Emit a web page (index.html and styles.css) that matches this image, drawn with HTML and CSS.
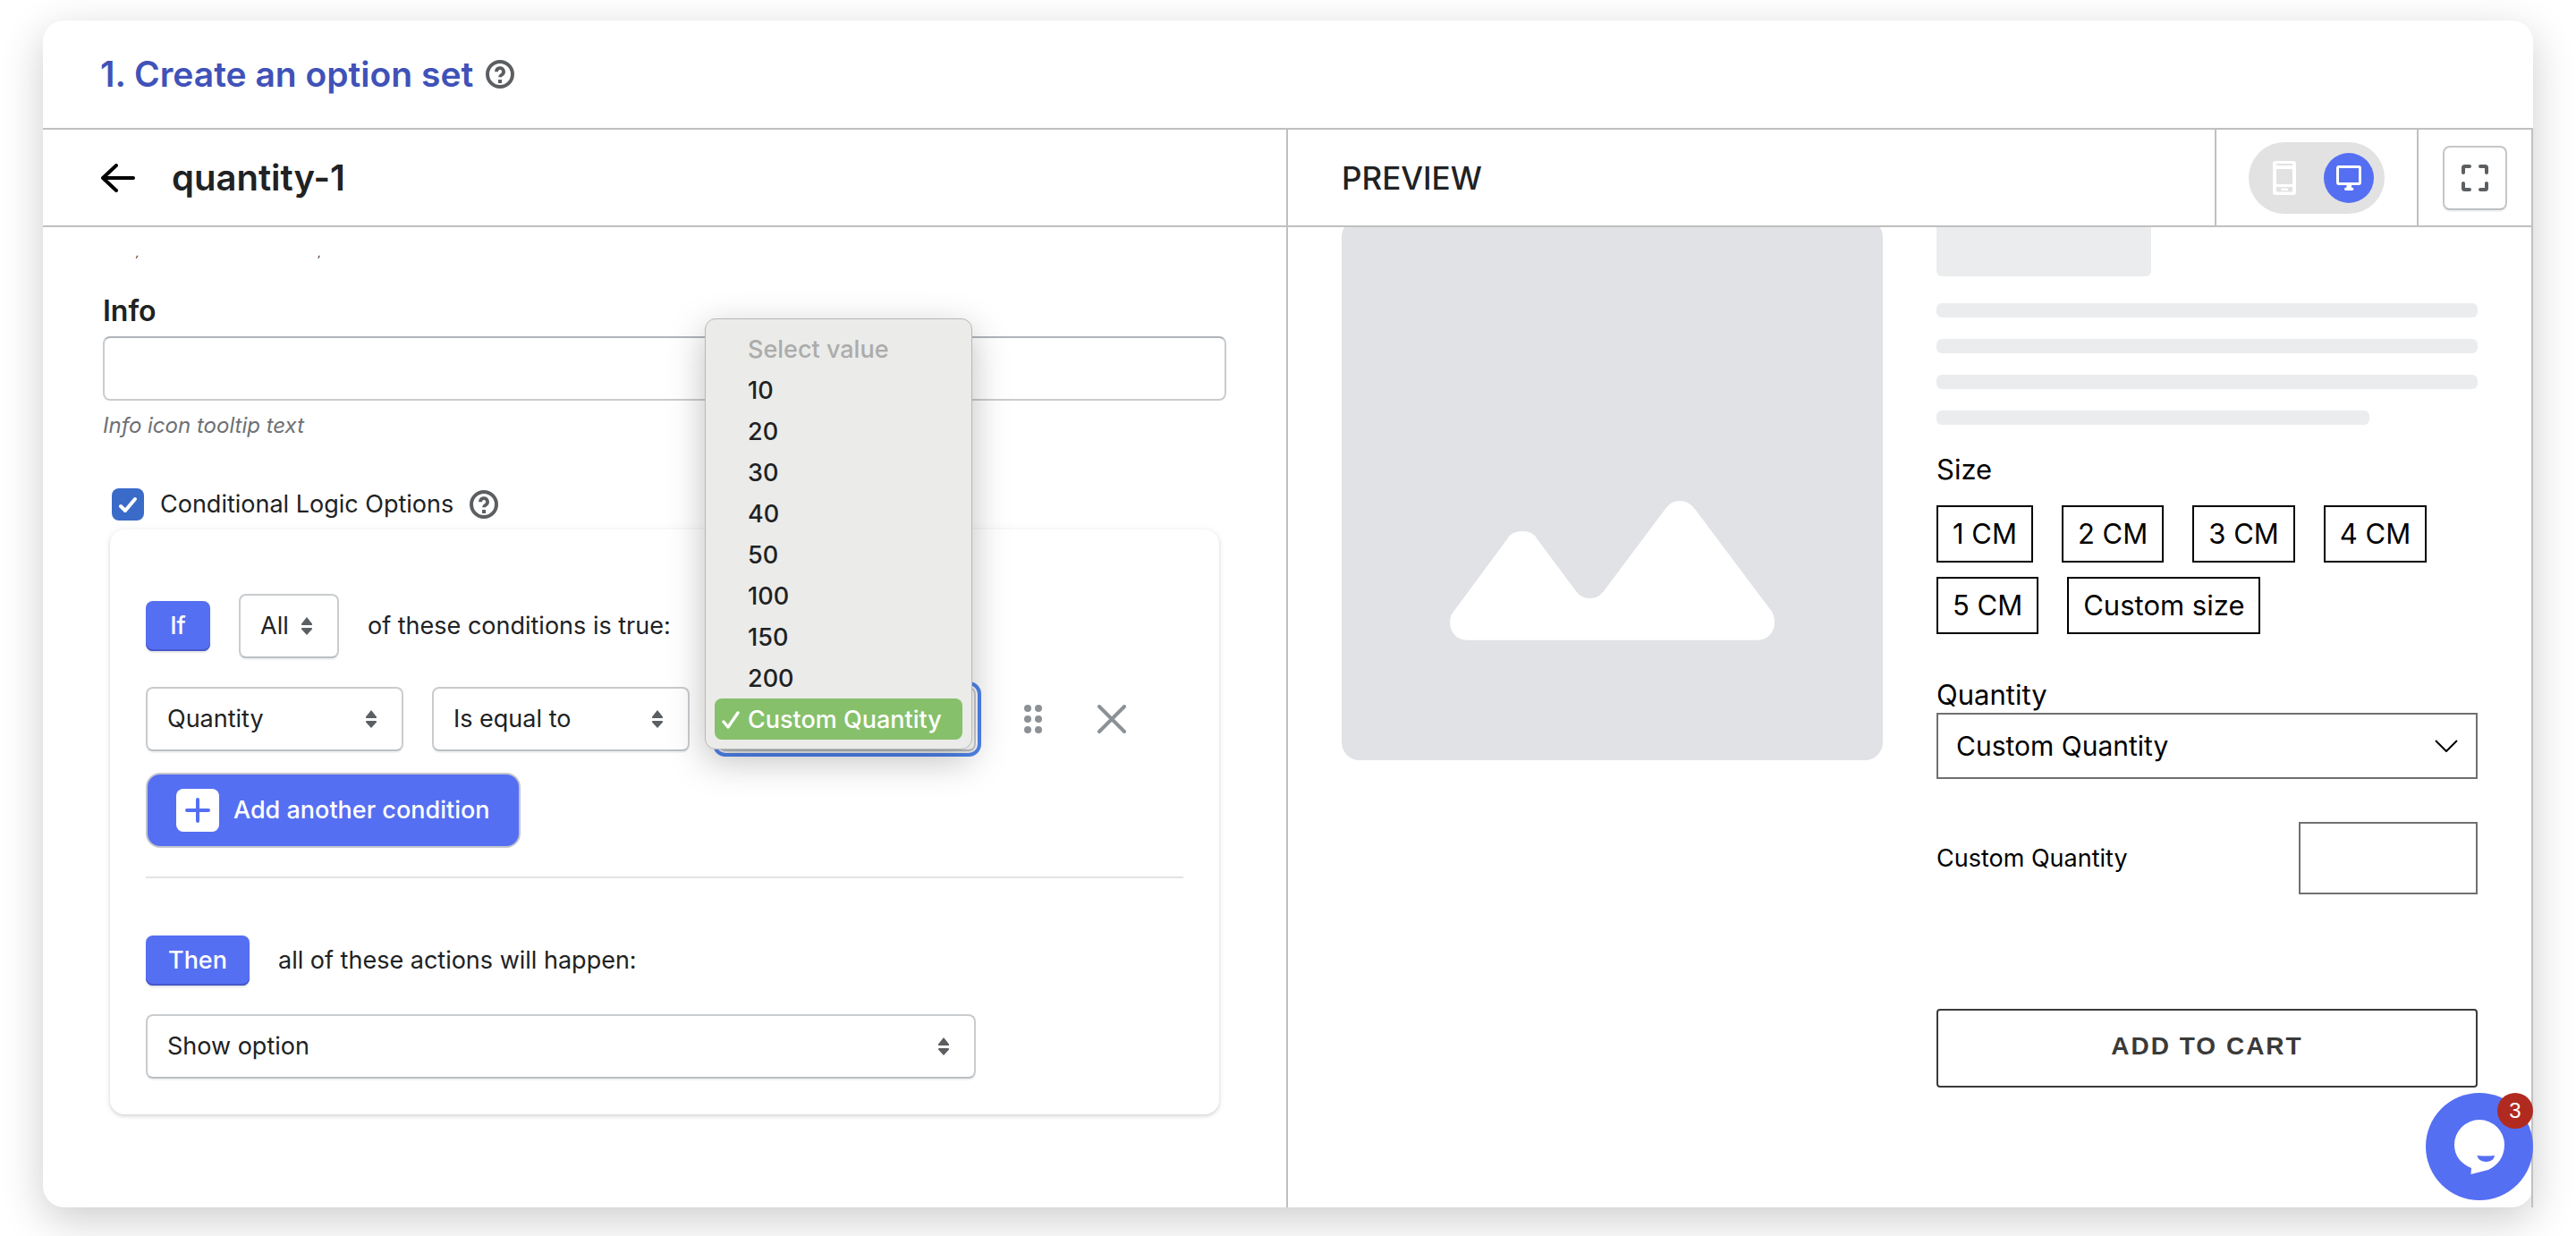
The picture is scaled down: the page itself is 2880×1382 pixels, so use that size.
FILE: index.html
```html
<!DOCTYPE html>
<html lang="en">
<head>
<meta charset="utf-8">
<title>Create an option set</title>
<link rel="stylesheet" href="styles.css">
</head>
<body>
<main class="card">
  <header class="card-head">
    <h1 class="card-title">1. Create an option set</h1>
    <svg class="help-icon" viewBox="0 0 32 32" role="img" aria-label="Help"><circle cx="16" cy="16" r="14" fill="none" stroke="currentColor" stroke-width="4"/><path d="M12 13.2a4 4 0 1 1 6 3.4c-1.300.8-2 1.300-2 2.600" fill="none" stroke="currentColor" stroke-width="3.800"/><rect x="14" y="22" width="4" height="4" fill="currentColor"/></svg>
  </header>

  <div class="columns">
    <section class="editor">
      <div class="bar editor-bar">
        <button class="back" type="button" aria-label="Back">
          <svg viewBox="0 0 40 32"><path d="M37 16H3M18 2L3 16l15 14" fill="none" stroke="currentColor" stroke-width="4" stroke-linecap="round" stroke-linejoin="round"/></svg>
        </button>
        <h2 class="set-name">quantity-1</h2>
      </div>

      <div class="editor-body">
        <p class="scrolled-help"><span>,</span><span>,</span></p>

        <label class="field-label" for="info">Info</label>
        <input class="text-input" id="info" type="text">
        <p class="help">Info icon tooltip text</p>

        <div class="logic-toggle">
          <input class="checkbox" id="logic" type="checkbox" checked>
          <label for="logic">Conditional Logic Options</label>
          <svg class="help-icon" viewBox="0 0 32 32" role="img" aria-label="Help"><circle cx="16" cy="16" r="14" fill="none" stroke="currentColor" stroke-width="4"/><path d="M12 13.2a4 4 0 1 1 6 3.4c-1.300.8-2 1.300-2 2.600" fill="none" stroke="currentColor" stroke-width="3.800"/><rect x="14" y="22" width="4" height="4" fill="currentColor"/></svg>
        </div>

        <div class="logic-card">
          <div class="row">
            <span class="tag">If</span>
            <div class="select select-short">
              <select aria-label="Match"><option>All</option><option>Any</option></select>
              <svg viewBox="0 0 14 20"><path d="M7 0l6 7.500q.5 1.500-1 1.500H2Q.5 9 1 7.500zM7 20l6-6.500q.5-1.500-1-1.500H2Q.5 12 1 13.500z" fill="currentColor"/></svg>
            </div>
            <span>of these conditions is true:</span>
          </div>

          <div class="row condition">
            <div class="select">
              <select aria-label="Option"><option>Quantity</option></select>
              <svg viewBox="0 0 14 20"><path d="M7 0l6 7.500q.5 1.500-1 1.500H2Q.5 9 1 7.500zM7 20l6-6.500q.5-1.500-1-1.500H2Q.5 12 1 13.500z" fill="currentColor"/></svg>
            </div>
            <div class="select">
              <select aria-label="Comparison"><option>Is equal to</option></select>
              <svg viewBox="0 0 14 20"><path d="M7 0l6 7.500q.5 1.500-1 1.500H2Q.5 9 1 7.500zM7 20l6-6.500q.5-1.500-1-1.500H2Q.5 12 1 13.500z" fill="currentColor"/></svg>
            </div>
            <div class="select select-open">
              <select aria-label="Value"><option>Custom Quantity</option></select>
              <ul class="menu" role="listbox" aria-label="Value">
                <li class="menu-item is-disabled" role="option" aria-disabled="true">Select value</li>
                <li class="menu-item" role="option">10</li>
                <li class="menu-item" role="option">20</li>
                <li class="menu-item" role="option">30</li>
                <li class="menu-item" role="option">40</li>
                <li class="menu-item" role="option">50</li>
                <li class="menu-item" role="option">100</li>
                <li class="menu-item" role="option">150</li>
                <li class="menu-item" role="option">200</li>
                <li class="menu-item is-selected" role="option" aria-selected="true"><svg viewBox="0 0 20 20"><path d="M2 12l5 6L18 2" fill="none" stroke="currentColor" stroke-width="3.400" stroke-linecap="round" stroke-linejoin="round"/></svg>Custom Quantity</li>
              </ul>
            </div>
            <div class="row-tools">
              <button class="icon-button" type="button" aria-label="Reorder condition">
                <svg viewBox="0 0 32 32"><g fill="currentColor"><circle cx="10" cy="4" r="4"/><circle cx="22" cy="4" r="4"/><circle cx="10" cy="16" r="4"/><circle cx="22" cy="16" r="4"/><circle cx="10" cy="28" r="4"/><circle cx="22" cy="28" r="4"/></g></svg>
              </button>
              <button class="icon-button" type="button" aria-label="Remove condition">
                <svg viewBox="0 0 32 32"><path d="M2 2l28 28M30 2L2 30" fill="none" stroke="currentColor" stroke-width="4" stroke-linecap="round"/></svg>
              </button>
            </div>
          </div>

          <button class="add-button" type="button">
            <span class="plus"><svg viewBox="0 0 28 28"><path d="M14 2v24M2 14h24" fill="none" stroke="currentColor" stroke-width="4" stroke-linecap="round"/></svg></span>
            Add another condition
          </button>

          <hr class="divider">

          <div class="row">
            <span class="tag">Then</span>
            <span>all of these actions will happen:</span>
          </div>

          <div class="select select-wide">
            <select aria-label="Action"><option>Show option</option></select>
            <svg viewBox="0 0 14 20"><path d="M7 0l6 7.500q.5 1.500-1 1.500H2Q.5 9 1 7.500zM7 20l6-6.500q.5-1.500-1-1.500H2Q.5 12 1 13.500z" fill="currentColor"/></svg>
          </div>
        </div>
      </div>
    </section>

    <section class="preview">
      <div class="bar preview-bar">
        <h2 class="preview-title">PREVIEW</h2>
        <div class="device-cell">
          <div class="device-switch">
            <button class="device" type="button" aria-label="Mobile">
              <svg class="phone" viewBox="0 0 26 38"><path fill="currentColor" fill-rule="evenodd" d="M3 0h20a3 3 0 0 1 3 3v32a3 3 0 0 1-3 3H3a3 3 0 0 1-3-3V3a3 3 0 0 1 3-3zM4 3v2h18V3zM4 9v17h18V9zM4 29v5.500h18V29zm6.500 1.500h5.500a1.200 1.200 0 0 1 0 2.500h-5.500a1.200 1.200 0 0 1 0-2.500z"/></svg>
            </button>
            <button class="device is-active" type="button" aria-label="Desktop">
              <svg class="monitor" viewBox="0 0 28 28"><path fill="currentColor" fill-rule="evenodd" d="M3 0h22a3 3 0 0 1 3 3v16a3 3 0 0 1-3 3h-8v2.500q2.500 0 2.500 1.800Q19.500 28 17.500 28h-7Q9 28 9 26.300q0-1.800 2.500-1.800V22H3a3 3 0 0 1-3-3V3a3 3 0 0 1 3-3zM3 3v16h22V3z"/></svg>
            </button>
          </div>
        </div>
        <div class="expand-cell">
          <button class="expand" type="button" aria-label="Full screen">
            <svg viewBox="0 0 30 30"><path d="M2 9V3.500Q2 2 3.500 2H9M21 2h5.500Q28 2 28 3.500V9M28 21v5.500q0 1.500-1.500 1.500H21M9 28H3.500Q2 28 2 26.500V21" fill="none" stroke="currentColor" stroke-width="4" stroke-linecap="round"/></svg>
          </button>
        </div>
      </div>

      <div class="preview-body">
        <div class="product">
          <div class="product-image">
            <svg viewBox="0 0 605 605" role="img" aria-label="Product image placeholder"><path fill="#fff" d="M125 439L185.600 357Q190 349 202 349T218 357L262 416Q268 424 277.500 424T293 416L361.700 324.300Q368 315 378 315T395 324.300L481 439Q484 444 484 450.700C484 462 476 470.700 465 470.700H140.500C129 470.700 121 462 121 450.700Q121 444 125 439z"/></svg>
          </div>
          <div class="product-info">
            <div class="skeleton-title"></div>
            <div class="skeleton-lines">
              <div class="skeleton-line"></div>
              <div class="skeleton-line"></div>
              <div class="skeleton-line"></div>
              <div class="skeleton-line is-short"></div>
            </div>

            <h3 class="option-label" id="size-label">Size</h3>
            <div class="chips" role="group" aria-labelledby="size-label">
              <button class="chip" type="button">1 CM</button>
              <button class="chip" type="button">2 CM</button>
              <button class="chip" type="button">3 CM</button>
              <button class="chip" type="button">4 CM</button>
              <button class="chip" type="button">5 CM</button>
              <button class="chip" type="button">Custom size</button>
            </div>

            <label class="option-label" for="quantity">Quantity</label>
            <div class="shop-select">
              <select id="quantity"><option>Custom Quantity</option></select>
              <svg viewBox="0 0 26 14"><path d="M1 1l12 12L25 1" fill="none" stroke="currentColor" stroke-width="2"/></svg>
            </div>

            <div class="custom-quantity">
              <label for="custom-quantity">Custom Quantity</label>
              <input id="custom-quantity" type="text">
            </div>

            <button class="cart-button" type="button">ADD TO CART</button>
          </div>
        </div>
      </div>
    </section>
  </div>
</main>

<button class="chat" type="button" aria-label="Open chat, 3 unread messages">
  <svg viewBox="0 0 120 120"><path fill="#fff" d="M60 30a28 28 0 0 1 28 28c0 14-8 23-18 28L50.500 91l.5-7C39 79 32 70 32 58a28 28 0 0 1 28-28z"/><path fill="#556ff2" d="M57.500 70q9.500 1 19.500 0-1 7-9.500 7t-10-7z"/></svg>
  <span class="chat-count">3</span>
</button>
</body>
</html>
```
FILE: styles.css
```css
* {
  box-sizing: border-box;
}

:root {
  --line: #c0c0c0;
  --brand: #556ff2;
  --text: #202223;
  --icon: #5c5f62;
}

body {
  display: flex;
  flex-direction: column;
  min-height: 100vh;
  margin: 0;
  padding: 23px 48px 32px;
  background: #fff;
  color: var(--text);
  font: 400 27px/36px Inter, "Liberation Sans", sans-serif;
}

h1, h2, h3, p, ul {
  margin: 0;
  padding: 0;
}

button, input, select {
  margin: 0;
  color: inherit;
  font: inherit;
}

svg {
  display: block;
}

.card {
  display: flex;
  flex: 1;
  flex-direction: column;
  border-radius: 24px;
  background: #fff;
  box-shadow: 0 14px 48px rgba(0, 0, 0, .2);
}

.card-head {
  display: flex;
  align-items: center;
  gap: 14px;
  height: 122px;
  padding: 0 64px;
  border-bottom: 2px solid var(--line);
}

.card-title {
  color: #4052b8;
  font-size: 39px;
  font-weight: 600;
  line-height: 48px;
}

.help-icon {
  width: 32px;
  height: 32px;
  color: var(--icon);
}

.columns {
  display: grid;
  flex: 1;
  grid-template-columns: 1fr 1fr;
}

.editor,
.preview {
  display: flex;
  flex-direction: column;
  min-width: 0;
  border-right: 2px solid var(--line);
}

.bar {
  display: flex;
  align-items: center;
  height: 109px;
  border-bottom: 2px solid var(--line);
}

/* Editor */

.editor-bar {
  gap: 40px;
  padding: 0 64px;
}

.back {
  width: 40px;
  padding: 0;
  border: 0;
  background: none;
  color: #000;
}

.set-name {
  font-size: 40px;
  font-weight: 600;
  line-height: 48px;
}

.editor-body {
  display: flex;
  flex-direction: column;
  padding: 23px 67px 32px;
}

.scrolled-help {
  display: flex;
  gap: 200px;
  margin: 0 0 39px 37px;
  font-size: 12px;
  font-style: italic;
  line-height: 12px;
}

.field-label {
  font-size: 32px;
  font-weight: 600;
  line-height: 40px;
}

.text-input {
  height: 72px;
  margin-top: 8px;
  padding: 0 22px;
  border: 2px solid #c9cccf;
  border-top-color: #aeb4b9;
  border-radius: 8px;
  background: #fff;
}

.help {
  margin-top: 12px;
  color: #6d7175;
  font-size: 24px;
  font-style: italic;
  line-height: 32px;
}

.logic-toggle {
  display: flex;
  align-items: center;
  margin: 54px 0 10px 10px;
}

.logic-toggle label {
  padding: 0 18px;
}

.checkbox {
  width: 36px;
  height: 36px;
  border-radius: 8px;
  appearance: none;
  background: #3b6bc9 url("data:image/svg+xml,%3Csvg xmlns='http://www.w3.org/2000/svg' viewBox='0 0 36 36'%3E%3Cpath d='M10 20l5 5L26 12' fill='none' stroke='%23fff' stroke-width='4' stroke-linecap='round' stroke-linejoin='round'/%3E%3C/svg%3E");
}

.logic-card {
  display: flex;
  flex-direction: column;
  margin: 0 8px;
  padding: 72px 40px 40px;
  border-radius: 16px;
  background: #fff;
  box-shadow: 0 0 10px rgba(23, 24, 24, .05), 0 2px 4px rgba(0, 0, 0, .15);
}

.row {
  display: flex;
  align-items: center;
  gap: 32px;
}

.tag {
  min-width: 72px;
  padding: 10px 25px;
  border-radius: 8px;
  background: var(--brand);
  box-shadow: 0 2px 2px rgba(0, 0, 0, .1), inset 0 -2px 0 #4557c8;
  color: #fff;
  font-weight: 500;
  text-align: center;
}

.select {
  display: grid;
  flex: 0 1 288px;
  align-items: center;
}

.select > * {
  grid-area: 1 / 1;
}

.select > svg {
  width: 14px;
  height: 20px;
  margin-right: 29px;
  justify-self: end;
  color: var(--icon);
  pointer-events: none;
}

.select select {
  width: 100%;
  height: 72px;
  padding: 0 22px;
  border: 2px solid #c9cccf;
  border-bottom-color: #babfc3;
  border-radius: 8px;
  appearance: none;
  background: #fff;
  box-shadow: 0 2px 0 rgba(0, 0, 0, .05);
}

.select-short {
  flex-basis: 112px;
}

.condition {
  margin-top: 32px;
}

.select-open {
  position: relative;
}

.select-open select {
  outline: 4px solid #4f84ee;
  outline-offset: 2px;
}

.menu {
  position: absolute;
  right: 4px;
  bottom: 2px;
  left: -15px;
  z-index: 1;
  padding: 10px;
  border: 1px solid #b8b8b8;
  border-radius: 12px;
  background: #ebebe9;
  box-shadow: 0 12px 40px rgba(0, 0, 0, .25);
  font-weight: 500;
  line-height: 44px;
  list-style: none;
}

.menu-item {
  padding: 2px 0 0 37px;
  border-radius: 8px;
}

.menu-item.is-disabled {
  color: #acacab;
}

.menu-item.is-selected {
  display: flex;
  align-items: center;
  gap: 9px;
  padding-left: 8px;
  background: #86c06a;
  color: #fff;
}

.menu-item svg {
  width: 20px;
  height: 20px;
}

.row-tools {
  display: flex;
  gap: 56px;
  padding-left: 16px;
}

.icon-button {
  width: 32px;
  height: 32px;
  padding: 0;
  border: 0;
  background: none;
  color: #8c9196;
}

.add-button {
  display: flex;
  align-items: center;
  align-self: start;
  gap: 16px;
  height: 84px;
  margin-top: 24px;
  padding: 0 32px;
  border: 2px solid #c4c6ce;
  border-radius: 16px;
  background: var(--brand);
  color: #fff;
  font-weight: 500;
}

.plus {
  padding: 10px;
  border-radius: 8px;
  background: #fff;
  color: var(--brand);
}

.plus svg {
  width: 28px;
  height: 28px;
}

.divider {
  width: 100%;
  height: 2px;
  margin: 32px 0 64px;
  border: 0;
  background: #e1e3e5;
}

.select-wide {
  flex-basis: auto;
  width: 80%;
  margin-top: 32px;
}

/* Preview */

.preview-bar {
  align-items: stretch;
}

.preview-title {
  display: flex;
  flex: 1;
  align-items: center;
  padding-left: 60px;
  font-size: 35px;
  font-weight: 500;
}

.device-cell,
.expand-cell {
  display: flex;
  align-items: center;
  padding: 0 36px;
  border-left: 2px solid var(--line);
}

.expand-cell {
  padding: 0 27px;
}

.device-switch {
  display: flex;
  gap: 16px;
  padding: 12px;
  border-radius: 40px;
  background: #e2e2e2;
}

.device {
  display: grid;
  width: 56px;
  height: 56px;
  padding: 0;
  border: 0;
  border-radius: 50%;
  background: none;
  color: #fff;
  place-items: center;
}

.device.is-active {
  background: var(--brand);
}

.phone {
  width: 26px;
  height: 38px;
}

.monitor {
  width: 28px;
  height: 28px;
}

.expand {
  display: grid;
  width: 72px;
  height: 72px;
  padding: 0;
  border: 2px solid #c4c6ca;
  border-bottom-color: #babfc3;
  border-radius: 8px;
  background: #fff;
  box-shadow: 0 2px 0 rgba(0, 0, 0, .05);
  color: var(--icon);
  place-items: center;
}

.expand svg {
  width: 30px;
  height: 30px;
}

.preview-body {
  padding: 0 60px;
  overflow: hidden;
  color: #000;
}

/* The preview is scrolled a little under its bar. */
.product {
  display: grid;
  grid-template-columns: 1fr 1fr;
  align-items: start;
  gap: 60px;
  margin-top: -9px;
}

.product-image {
  border-radius: 20px;
  background: #e1e2e6;
}

.product-info {
  display: flex;
  flex-direction: column;
  font-size: 27px;
}

.skeleton-title {
  width: 240px;
  height: 64px;
  border-radius: 6px;
  background: #ebecee;
}

.skeleton-lines {
  display: grid;
  gap: 24px;
  margin: 30px 0;
}

.skeleton-line {
  height: 16px;
  border-radius: 6px;
  background: #ebecee;
}

.skeleton-line.is-short {
  width: 80%;
}

.option-label {
  font-size: 31px;
  font-weight: 400;
  line-height: 40px;
}

.chips {
  display: flex;
  flex-wrap: wrap;
  gap: 16px 32px;
  margin: 20px 0 48px;
}

.chip {
  height: 64px;
  padding: 0 16px;
  border: 2px solid #000;
  background: #fff;
  font-size: 31px;
}

.shop-select {
  display: grid;
  align-items: center;
}

.shop-select > * {
  grid-area: 1 / 1;
}

.shop-select select {
  height: 74px;
  padding: 0 20px;
  border: 2px solid #707070;
  border-radius: 0;
  appearance: none;
  background: #fff;
  font-size: 30px;
}

.shop-select svg {
  width: 26px;
  height: 14px;
  margin-right: 22px;
  justify-self: end;
  pointer-events: none;
}

.custom-quantity {
  display: flex;
  align-items: center;
  justify-content: space-between;
  margin: 48px 0 128px;
}

.custom-quantity input {
  width: 200px;
  height: 81px;
  padding: 0 20px;
  border: 2px solid #707070;
  background: #fff;
}

.cart-button {
  height: 88px;
  padding: 0 0 4px;
  border: 2px solid #3a3a3a;
  border-radius: 4px;
  background: #fff;
  color: #3a3a3a;
  font-family: "Liberation Sans", Arial, sans-serif;
  font-size: 28px;
  font-weight: 700;
  letter-spacing: 2px;
}

/* Chat launcher */

.chat {
  position: fixed;
  right: 48px;
  bottom: 40px;
  width: 120px;
  height: 120px;
  padding: 0;
  border: 0;
  border-radius: 50%;
  background: var(--brand);
}

.chat-count {
  position: absolute;
  top: 0;
  right: 0;
  width: 40px;
  border-radius: 50%;
  background: #b02a20;
  color: #fff;
  font: 400 24px/40px "Liberation Sans", Arial, sans-serif;
  text-align: center;
}
```
